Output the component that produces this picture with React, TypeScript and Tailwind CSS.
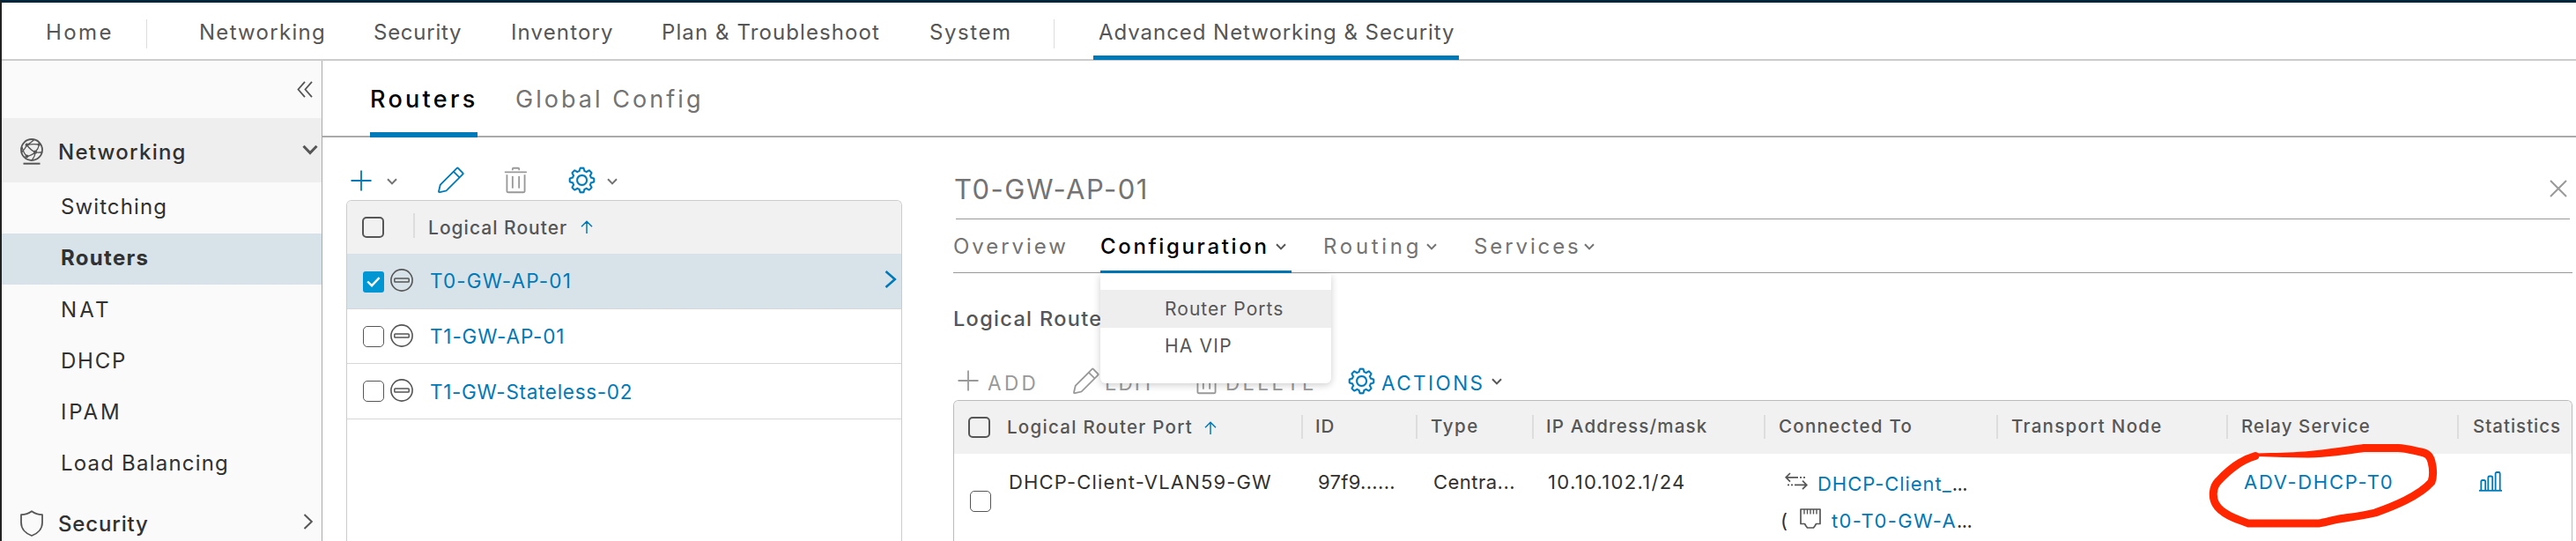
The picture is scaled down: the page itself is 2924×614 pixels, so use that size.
import React from "react";

type IconProps = { className?: string };

const Chevron = ({ className = "" }: IconProps) => (
  <svg viewBox="0 0 12 8" className={`shrink-0 ${className}`} fill="none" stroke="currentColor" strokeWidth="2">
    <path d="M1 1.2 6 6.4 11 1.2" />
  </svg>
);

const Plus = ({ className = "" }: IconProps) => (
  <svg viewBox="0 0 24 24" className={`h-6 w-6 shrink-0 ${className}`} fill="none" stroke="currentColor" strokeWidth="1.8">
    <path d="M0.5 12H23.5M12 0.5V23.5" />
  </svg>
);

const Pencil = ({ className = "" }: IconProps) => (
  <svg viewBox="0 0 36 36" className={`h-[33px] w-[33px] shrink-0 ${className}`} fill="currentColor">
    <path d="M33.87,8.32,28,2.42a2.07,2.07,0,0,0-2.92,0L4.27,23.2l-1.9,8.2a2.06,2.06,0,0,0,2,2.5,2.14,2.14,0,0,0,.43,0L13.09,32,33.87,11.24A2.07,2.07,0,0,0,33.87,8.32ZM12.09,30.2,4.32,31.83l1.77-7.62L21.66,8.7l6,6ZM29,13.25l-6-6,3.48-3.46,5.9,6Z" />
  </svg>
);

const Trash = ({ className = "" }: IconProps) => (
  <svg viewBox="0 0 36 36" className={`h-[33px] w-[33px] shrink-0 ${className}`} fill="currentColor">
    <path d="M27.14,34H8.86A2.93,2.93,0,0,1,6,31V11.23H8V31a.93.93,0,0,0,.86,1H27.14A.93.93,0,0,0,28,31V11.23h2V31A2.93,2.93,0,0,1,27.14,34Z" />
    <path d="M30.78,9H5A1,1,0,0,1,5,7H30.78a1,1,0,0,1,0,2Z" />
    <rect x="21" y="13" width="2" height="15" />
    <rect x="13" y="13" width="2" height="15" />
    <path d="M23,5.86H21.1V4H14.9V5.86H13V4a2,2,0,0,1,1.9-2h6.2A2,2,0,0,1,23,4Z" />
  </svg>
);

const Gear = ({ className = "" }: IconProps) => (
  <svg viewBox="0 0 36 36" className={`h-[33px] w-[33px] shrink-0 ${className}`} fill="currentColor" stroke="currentColor" strokeWidth="0.3">
    <path d="M18.1,11c-3.9,0-7,3.1-7,7s3.1,7,7,7c3.9,0,7-3.1,7-7S22,11,18.1,11z M18.1,23c-2.8,0-5-2.2-5-5s2.2-5,5-5c2.8,0,5,2.2,5,5S20.9,23,18.1,23z" />
    <path d="M32.8,14.7L30,13.8l-0.6-1.5l1.4-2.6c0.3-0.6,0.2-1.4-0.3-1.9l-2.4-2.4c-0.5-0.5-1.3-0.6-1.9-0.3l-2.6,1.4l-1.5-0.6l-0.9-2.8C21,2.5,20.4,2,19.7,2h-3.4c-0.7,0-1.3,0.5-1.4,1.2L14,6c-0.6,0.1-1.1,0.3-1.6,0.6L9.8,5.2C9.2,4.9,8.4,5,7.9,5.5L5.5,7.9C5,8.4,4.9,9.2,5.2,9.8l1.3,2.5c-0.2,0.5-0.4,1.1-0.6,1.6l-2.8,0.9C2.5,15,2,15.6,2,16.3v3.4c0,0.7,0.5,1.3,1.2,1.5L6,22.1l0.6,1.5l-1.4,2.6c-0.3,0.6-0.2,1.4,0.3,1.9l2.4,2.4c0.5,0.5,1.3,0.6,1.9,0.3l2.6-1.4l1.5,0.6l0.9,2.9c0.2,0.6,0.8,1.1,1.5,1.1h3.4c0.7,0,1.3-0.5,1.5-1.1l0.9-2.9l1.5-0.6l2.6,1.4c0.6,0.3,1.4,0.2,1.9-0.3l2.4-2.4c0.5-0.5,0.6-1.3,0.3-1.9l-1.4-2.6l0.6-1.5l2.9-0.9c0.6-0.2,1.1-0.8,1.1-1.5v-3.4C34,15.6,33.5,14.9,32.8,14.7z M32,19.4l-3.6,1.1L28.3,21c-0.3,0.7-0.6,1.4-0.9,2.1l-0.3,0.5l1.8,3.3l-2,2l-3.3-1.8l-0.5,0.3c-0.7,0.4-1.4,0.7-2.1,0.9l-0.5,0.1L19.4,32h-2.8l-1.1-3.6L15,28.3c-0.7-0.3-1.4-0.6-2.1-0.9l-0.5-0.3l-3.3,1.8l-2-2l1.8-3.3l-0.3-0.5c-0.4-0.7-0.7-1.4-0.9-2.1l-0.1-0.5L4,19.4v-2.8l3.4-1l0.2-0.5c0.2-0.8,0.5-1.5,0.9-2.2l0.3-0.5L7.1,9.1l2-2l3.2,1.8l0.5-0.3c0.7-0.4,1.4-0.7,2.2-0.9l0.5-0.2L16.6,4h2.8l1.1,3.5L21,7.7c0.7,0.2,1.4,0.5,2.1,0.9l0.5,0.3l3.3-1.8l2,2l-1.8,3.3l0.3,0.5c0.4,0.7,0.7,1.4,0.9,2.1l0.1,0.5l3.6,1.1V19.4z" />
  </svg>
);

const NetworkGlobe = () => (
  <svg viewBox="0 0 26 30" className="h-[30px] w-[26px] shrink-0 text-[#565656]" fill="none" stroke="currentColor" strokeWidth="1.8">
    <circle cx="13" cy="13" r="12" />
    <path d="M7.5 7.5C6 11 3.5 14 1.4 16M7.5 7.5C11 5.5 14 3.5 15.5 1.5M7.5 7.5C10 11 13 14 17 15.7M7.5 7.5C12 6.5 17 6.5 21.5 7M21.5 7C21 10 19.5 13 17 15.7M17 15.7C14.5 18 11 20 7.5 20.3M17 15.7C19.5 16.2 22 16.2 24.5 15.5M17 15.7C17 19 15.5 22 13.5 24.5M2 10C3 14 5 18 7.5 20.3" strokeWidth="1.3" />
    <path d="M3.5 28.7H22.5" strokeWidth="2" />
    <g fill="currentColor" stroke="none">
      <circle cx="7.5" cy="7.5" r="1.9" />
      <circle cx="21.3" cy="7" r="1.7" />
      <circle cx="17" cy="15.7" r="2.1" />
      <circle cx="7.5" cy="20.3" r="1.9" />
    </g>
  </svg>
);

const Shield = () => (
  <svg viewBox="0 0 26 30" className="h-[30px] w-[26px] shrink-0 text-[#565656]" fill="none" stroke="currentColor" strokeWidth="1.8" strokeLinejoin="round">
    <path d="M13 1.2C16.5 3.8 20.5 5 25 5.2V14C25 21 20 26.5 13 29C6 26.5 1 21 1 14V5.2C5.5 5 9.5 3.8 13 1.2Z" />
  </svg>
);

const MinusCircle = () => (
  <svg viewBox="0 0 26 26" className="h-[26px] w-[26px] shrink-0 text-[#565656]" fill="none" stroke="currentColor" strokeWidth="1.6">
    <circle cx="13" cy="13" r="12.1" />
    <rect x="4.8" y="11" width="16.4" height="4" rx="0.8" strokeWidth="1.5" />
  </svg>
);

const SortUp = ({ className = "" }: IconProps) => (
  <svg viewBox="0 0 14 15" className={`h-[15px] w-[14px] shrink-0 text-[#0079b8] ${className}`} fill="none" stroke="currentColor" strokeWidth="1.5">
    <path d="M7 15V1.2M1 7.2 7 1.2 13 7.2" />
  </svg>
);

const SwitchArrows = () => (
  <svg viewBox="0 0 26 20" className="h-5 w-[26px] shrink-0 text-[#565656]" fill="none" stroke="currentColor" strokeWidth="1.7">
    <path d="M6 1 1.2 5.8 6 10.6M1.2 5.8H15M20 9.6 24.8 14.4 20 19.2M24.8 14.4H11" />
    <path d="M17 5.8H19M21 5.8H23M3 14.4H5M7 14.4H9" />
  </svg>
);

const EthernetPort = () => (
  <svg viewBox="0 0 24 23" className="h-[23px] w-6 shrink-0 text-[#565656]" fill="none" stroke="currentColor" strokeWidth="1.7" strokeLinejoin="round">
    <path d="M1 1H23V17.5H18.5L17 20L15.5 22H8.5L7 20L5.5 17.5H1Z" />
    <path d="M5 1V6.5M8.5 1V6.5M12 1V6.5M15.5 1V6.5M19 1V6.5" strokeWidth="1.4" />
  </svg>
);

const BarChart = () => (
  <svg viewBox="0 0 26 23" className="h-[23px] w-[26px] shrink-0 text-[#0079b8]" fill="none" stroke="currentColor" strokeWidth="1.8">
    <path d="M0 21.8H26" />
    <path d="M2.3 21V11.5A1.5 1.5 0 0 1 3.8 10H5.7A1.5 1.5 0 0 1 7.2 11.5V21M10.3 21V7A1.5 1.5 0 0 1 11.8 5.5H13.7A1.5 1.5 0 0 1 15.2 7V21M18.6 21V2.5A1.5 1.5 0 0 1 20.1 1H22.2A1.5 1.5 0 0 1 23.7 2.5V21" />
  </svg>
);

const Checkbox = ({ checked = false, heavy = false, className = "" }: { checked?: boolean; heavy?: boolean; className?: string }) =>
  checked ? (
    <span className={`flex h-6 w-6 shrink-0 items-center justify-center rounded-[3px] bg-[#0095d3] ${className}`}>
      <svg viewBox="0 0 16 12" className="h-3 w-4" fill="none" stroke="white" strokeWidth="2.4">
        <path d="M1.2 5.5 6 10.2 14.6 1.2" />
      </svg>
    </span>
  ) : (
    <span
      className={`h-6 shrink-0 rounded-[5px] border-[#565656] ${heavy ? "w-[25px] border-2" : "w-6 border-[1.5px] bg-white"} ${className}`}
    />
  );

function TopNav() {
  return (
    <header className="grid h-[66px] grid-cols-[114px_60px_198px_156px_171px_304px_141px_45px_415px] items-start border-b-2 border-[#ccc] pl-[50px] text-[24px] text-[#565656] [&>span]:flex [&>span]:h-[65px] [&>span]:items-center [&>span]:pt-[3px]">
      <span className="tracking-[2.4px]">Home</span>
      <i className="mt-[19px] h-[33px] w-px bg-[#ddd]" />
      <span className="tracking-[1.28px]">Networking</span>
      <span className="tracking-[0.74px]">Security</span>
      <span className="tracking-[1.14px]">Inventory</span>
      <span className="tracking-[1.1px]">Plan &amp; Troubleshoot</span>
      <span className="tracking-[1.57px]">System</span>
      <i className="mt-[19px] h-[33px] w-px bg-[#ddd]" />
      <span className="border-b-[5px] border-[#0079b8] pl-[6px] !pt-[8px] tracking-[0.95px]">
        Advanced Networking &amp; Security
      </span>
    </header>
  );
}

const SIDE_ITEMS = [
  { label: "NAT", tracking: "tracking-[3.2px]" },
  { label: "DHCP", tracking: "tracking-[1.77px]" },
  { label: "IPAM", tracking: "tracking-[2.81px]" },
  { label: "Load Balancing", tracking: "tracking-[1.2px]" },
];

function Sidebar() {
  return (
    <aside className="flex w-[364px] shrink-0 flex-col overflow-hidden border-r-[1.5px] border-[#aaa] bg-[#fafafa] text-[24px] text-[#313131]">
      <div className="flex h-[65px] shrink-0 items-center justify-end pr-2.5">
        <svg viewBox="0 0 18 19" className="h-[19px] w-[18px] text-[#565656]" fill="none" stroke="currentColor" strokeWidth="1.8">
          <path d="M9 .8 1.5 9.5 9 18.2M17 .8 9.5 9.5 17 18.2" />
        </svg>
      </div>
      <div className="flex h-[73px] shrink-0 items-center bg-[#eee] pl-[21px] pr-1 pt-[3px] font-medium">
        <NetworkGlobe />
        <span className="ml-[17px] flex-1 pt-px tracking-[1.25px]">Networking</span>
        <Chevron className="mb-[5px] h-3 w-[18px] text-[#565656]" />
      </div>
      <div className="flex h-[58px] shrink-0 items-center pb-[3px] pl-[67px] tracking-[1.1px]">Switching</div>
      <div className="flex h-[58px] shrink-0 items-center bg-[#d8e3e9] pb-[3px] pl-[67px] font-bold tracking-[1.3px]">Routers</div>
      {SIDE_ITEMS.map((item) => (
        <div key={item.label} className={`flex h-[58px] shrink-0 items-center pb-px pl-[67px] ${item.tracking}`}>
          {item.label}
        </div>
      ))}
      <div className="flex h-[78px] shrink-0 items-center pl-[21px] pr-[9px] font-medium">
        <Shield />
        <span className="ml-[17px] flex-1 pt-px tracking-[0.83px]">Security</span>
        <svg viewBox="0 0 12 18" className="mb-1 h-[18px] w-3 text-[#565656]" fill="none" stroke="currentColor" strokeWidth="2">
          <path d="M1.5 1 9.8 9 1.5 17" />
        </svg>
      </div>
    </aside>
  );
}

function RouterList() {
  return (
    <section className="flex w-[631px] shrink-0 flex-col">
      <div className="flex h-[71px] shrink-0 items-center pl-[5px] pt-[26px] text-[#0079b8]">
        <Plus />
        <Chevron className="ml-[17px] mt-[3px] h-2 w-3 text-[#737373]" />
        <Pencil className="ml-[44px]" />
        <Trash className="ml-[41px] text-[#999]" />
        <Gear className="ml-[42px]" />
        <Chevron className="ml-[12px] mt-[3px] h-2 w-3 text-[#737373]" />
      </div>
      <div className="flex-1 overflow-hidden rounded-t-md border-x border-t-[1.5px] border-[#ccc] bg-white text-[22.5px] text-[#0079b8]">
        <div className="flex h-[60px] items-center bg-[#f1f1f1] pl-[17px] text-[21px] font-medium text-[#565656]">
          <Checkbox heavy className="-mt-px" />
          <i className="-mt-1 ml-[33px] h-7 w-[2px] bg-[#ddd]" />
          <span className="ml-[15px] w-[173px] tracking-[1.01px]">Logical Router</span>
          <SortUp className="-mt-px" />
        </div>
        <div className="flex h-[63px] items-center border-b border-[#d7d7d7] bg-[#d8e3e9] pl-[18px] pr-[5px]">
          <Checkbox checked className="mt-px" />
          <span className="-mt-[3px] ml-[7px]">
            <MinusCircle />
          </span>
          <span className="ml-[19px] flex-1 pt-px tracking-[1.15px]">T0-GW-AP-01</span>
          <svg viewBox="0 0 14 20" className="mb-[5px] h-5 w-3.5" fill="none" stroke="currentColor" strokeWidth="2.6">
            <path d="M1.5 1 11.8 10 1.5 19" />
          </svg>
        </div>
        <div className="flex h-[62px] items-center border-b border-[#d7d7d7] pl-[18px]">
          <Checkbox />
          <span className="-mt-[2px] ml-[7px]">
            <MinusCircle />
          </span>
          <span className="ml-[19px] pt-[2px] tracking-[0.85px]">T1-GW-AP-01</span>
        </div>
        <div className="flex h-[63px] items-center border-b border-[#d7d7d7] pl-[18px]">
          <Checkbox />
          <span className="-mt-[2px] ml-[7px]">
            <MinusCircle />
          </span>
          <span className="ml-[19px] pt-[2px] tracking-[0.7px]">T1-GW-Stateless-02</span>
        </div>
      </div>
    </section>
  );
}

function ConfigurationMenu() {
  return (
    <div className="absolute left-0 top-[62px] z-10 h-[124px] w-[262px] rounded-b-md bg-white pt-[18px] text-[21px] font-normal text-[#565656] shadow-[0_2px_8px_rgba(0,0,0,0.2)]">
      <div className="flex h-[43px] items-center bg-[#eee] pb-px pl-[73px] tracking-[1.05px]">Router Ports</div>
      <div className="flex h-[42px] items-center pb-px pl-[73px] tracking-[1.2px]">HA VIP</div>
    </div>
  );
}

const PORT_COLUMNS = [
  { label: "ID", style: "ml-[14px] tracking-[0.8px]" },
  { label: "Type", style: "ml-[15px] tracking-[1.6px]" },
  { label: "IP Address/mask", style: "ml-[14px] tracking-[1.2px]" },
  { label: "Connected To", style: "ml-[15px] tracking-[1.25px]" },
  { label: "Transport Node", style: "ml-[15px] tracking-[1.3px]" },
  { label: "Relay Service", style: "ml-[15px] tracking-[1.05px]" },
  { label: "Statistics", style: "ml-[16px] tracking-[1px]" },
];

function PortTable() {
  return (
    <div className="w-[1838px] flex-1 overflow-hidden rounded-t-md border-x border-t border-[#bbb] bg-white">
      <div className="grid h-[60px] grid-cols-[59px_335px_130px_132px_263px_264px_261px_262px_1fr] items-center bg-[#f1f1f1] text-[20.5px] font-medium text-[#565656]">
        <Checkbox heavy className="-mt-px ml-[16px]" />
        <div className="flex items-center pt-px">
          <span className="w-[225px] pl-px tracking-[1.28px]">Logical Router Port</span>
          <SortUp />
        </div>
        {PORT_COLUMNS.map((column) => (
          <div key={column.label} className="-mt-[2px] flex items-center whitespace-nowrap">
            <i className="h-[27px] w-[2px] bg-[#ddd]" />
            <span className={column.style}>{column.label}</span>
          </div>
        ))}
      </div>
      <div className="grid h-[110px] grid-cols-[59px_335px_130px_132px_263px_264px_261px_262px_1fr] items-start whitespace-nowrap text-[22px] leading-8 text-[#313131]">
        <Checkbox className="ml-[18px] mt-[42px]" />
        <span className="mt-4 pl-[3px] tracking-[1.17px]">DHCP-Client-VLAN59-GW</span>
        <span className="mt-4 pl-[19px] tracking-[0.3px]">97f9......</span>
        <span className="mt-4 pl-[20px] tracking-[0.48px]">Centra...</span>
        <span className="mt-4 pl-[18px] tracking-[1.31px]">10.10.102.1/24</span>
        <div className="mt-[18px]">
          <div className="flex h-8 items-center pl-[24px]">
            <span className="-mt-1.5">
              <SwitchArrows />
            </span>
            <span className="ml-[11px] tracking-[0.95px] text-[#0079b8]">DHCP-Client_</span>
            <span className="tracking-[-0.6px]">...</span>
          </div>
          <div className="mt-[10px] flex h-8 items-center pl-[19px]">
            <span className="w-[22px]">(</span>
            <span className="-mt-1.5">
              <EthernetPort />
            </span>
            <span className="ml-[12px] tracking-[1.35px] text-[#0079b8]">t0-T0-GW-A</span>
            <span className="tracking-[-0.6px]">...</span>
          </div>
        </div>
        <span />
        <span className="mt-4 pl-[20px] tracking-[1.7px] text-[#0079b8]">ADV-DHCP-T0</span>
        <span className="mt-5 pl-[25px]">
          <BarChart />
        </span>
      </div>
    </div>
  );
}

function RouterDetail() {
  return (
    <section className="ml-[58px] flex flex-1 flex-col text-[24px] text-[#737373]">
      <div className="ml-[3px] mr-[7px] flex h-[93px] shrink-0 items-center justify-between border-b border-[#999] pr-[3px] pt-[25px]">
        <span className="-ml-[2px] text-[31px] tracking-[1.5px]">T0-GW-AP-01</span>
        <svg viewBox="0 0 20 20" className="mb-[2px] h-5 w-5 text-[#999]" fill="none" stroke="currentColor" strokeWidth="2">
          <path d="M1 1 19 19M19 1 1 19" />
        </svg>
      </div>
      <nav className="mr-1 flex h-[61px] shrink-0 items-start border-b border-[#999] [&>*]:h-[61px]">
        <span className="flex w-[167px] items-center tracking-[2.95px]">Overview</span>
        <div className="relative flex w-[217px] items-center border-b-[3px] border-[#0079b8] pt-[3px] font-medium text-black">
          <span className="w-[199px] tracking-[2.65px]">Configuration</span>
          <Chevron className="h-2 w-3 text-[#565656]" />
          <ConfigurationMenu />
        </div>
        <div className="ml-[36px] flex w-[171px] items-center">
          <span className="w-[117px] tracking-[3.7px]">Routing</span>
          <Chevron className="h-2 w-3" />
        </div>
        <div className="flex items-center">
          <span className="w-[125px] tracking-[2.9px]">Services</span>
          <Chevron className="h-2 w-3" />
        </div>
      </nav>
      <h2 className="flex h-[103px] shrink-0 items-center text-[23.5px] font-medium tracking-[1.33px] text-[#565656]">
        Logical Router Ports
      </h2>
      <div className="flex h-[41px] shrink-0 items-center pb-[3px] pl-[5px] text-[22.5px] text-[#999]">
        <Plus />
        <span className="ml-[10px] w-[95px] pt-[6px] tracking-[3.4px]">ADD</span>
        <Pencil />
        <span className="ml-[5px] w-[99px] pt-[6px] tracking-[2px]">EDIT</span>
        <Trash />
        <span className="ml-[5px] w-[138px] pt-[6px] tracking-[3.3px]">DELETE</span>
        <Gear className="text-[#0079b8]" />
        <span className="ml-[6px] w-[125px] pt-[6px] tracking-[2.45px] text-[#0079b8]">ACTIONS</span>
        <Chevron className="mt-[2px] h-2 w-3 text-[#565656]" />
      </div>
      <PortTable />
    </section>
  );
}

function Annotation() {
  return (
    <svg
      viewBox="2490 490 300 120"
      className="pointer-events-none absolute left-[2486px] top-[487px] h-[120px] w-[300px]"
      fill="none"
      stroke="#ff2600"
      strokeWidth="9"
      strokeLinecap="round"
      strokeLinejoin="round"
    >
      <path d="M2562 517.5C2546 522 2532 533 2520 546C2513 553 2513 565 2517 572C2523 583 2540 589 2554 594H2634C2642 593 2650 590 2660 588.5C2674 586.5 2686 585 2698 582C2712 577 2722 573 2732 568C2744 562 2754 556 2762 547C2764 541 2764 532 2762 524C2760 517 2757 514.5 2750 513C2740 511 2734 509 2724 508.5H2686" />
      <path d="M2564 514.5C2585 514 2602 513.5 2618 512.5C2642 510.500 2664 506.500 2686 504V513C2664 516 2644 519 2622 519.500C2604 519.500 2585 518.500 2564 518Z" fill="#ff2600" stroke="none" />
    </svg>
  );
}

export default function App() {
  return (
    <div className="relative flex h-[614px] w-[2924px] flex-col overflow-hidden border-l-2 border-t-[3px] border-l-[#222] border-t-[#00263b] bg-white font-[Inter,sans-serif] leading-none whitespace-nowrap">
      <TopNav />
      <div className="flex min-h-0 flex-1">
        <Sidebar />
        <main className="flex flex-1 flex-col">
          <div className="flex h-[87px] shrink-0 items-start border-b-2 border-[#aaa] pl-[54px] text-[27px] [&>span]:flex [&>span]:h-[87px] [&>span]:items-center">
            <span className="w-[122px] border-b-[6px] border-[#0079b8] pt-[5px] font-medium tracking-[3.3px] text-black">Routers</span>
            <span className="ml-[43px] tracking-[3.05px] text-[#737373]">Global Config</span>
          </div>
          <div className="flex min-h-0 flex-1 pl-[27px]">
            <RouterList />
            <RouterDetail />
          </div>
        </main>
      </div>
      <Annotation />
    </div>
  );
}
